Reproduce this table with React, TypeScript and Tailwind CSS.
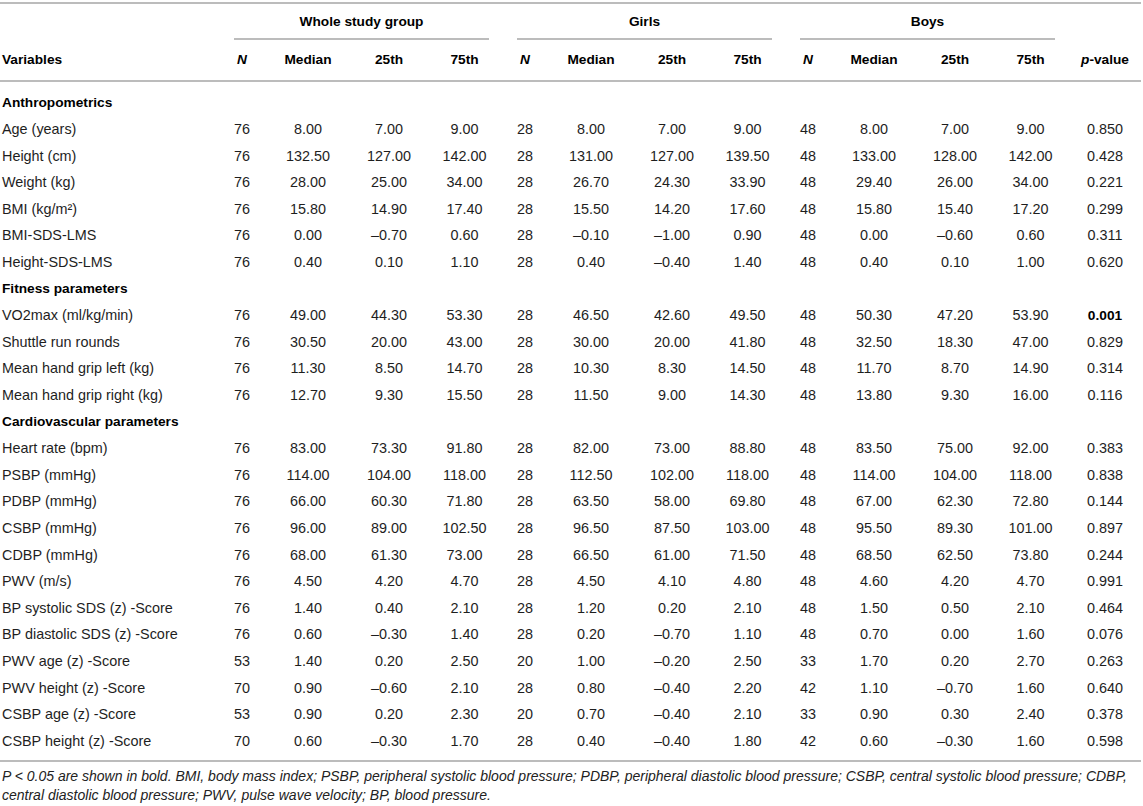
import React from "react";

type Row = { label: string; cells: string[]; p: string; bold?: boolean } | { section: string };

const rows: Row[] = [
  { section: "Anthropometrics" },
  { label: "Age (years)", cells: ["76", "8.00", "7.00", "9.00", "28", "8.00", "7.00", "9.00", "48", "8.00", "7.00", "9.00"], p: "0.850" },
  { label: "Height (cm)", cells: ["76", "132.50", "127.00", "142.00", "28", "131.00", "127.00", "139.50", "48", "133.00", "128.00", "142.00"], p: "0.428" },
  { label: "Weight (kg)", cells: ["76", "28.00", "25.00", "34.00", "28", "26.70", "24.30", "33.90", "48", "29.40", "26.00", "34.00"], p: "0.221" },
  { label: "BMI (kg/m²)", cells: ["76", "15.80", "14.90", "17.40", "28", "15.50", "14.20", "17.60", "48", "15.80", "15.40", "17.20"], p: "0.299" },
  { label: "BMI-SDS-LMS", cells: ["76", "0.00", "–0.70", "0.60", "28", "–0.10", "–1.00", "0.90", "48", "0.00", "–0.60", "0.60"], p: "0.311" },
  { label: "Height-SDS-LMS", cells: ["76", "0.40", "0.10", "1.10", "28", "0.40", "–0.40", "1.40", "48", "0.40", "0.10", "1.00"], p: "0.620" },
  { section: "Fitness parameters" },
  { label: "VO2max (ml/kg/min)", cells: ["76", "49.00", "44.30", "53.30", "28", "46.50", "42.60", "49.50", "48", "50.30", "47.20", "53.90"], p: "0.001", bold: true },
  { label: "Shuttle run rounds", cells: ["76", "30.50", "20.00", "43.00", "28", "30.00", "20.00", "41.80", "48", "32.50", "18.30", "47.00"], p: "0.829" },
  { label: "Mean hand grip left (kg)", cells: ["76", "11.30", "8.50", "14.70", "28", "10.30", "8.30", "14.50", "48", "11.70", "8.70", "14.90"], p: "0.314" },
  { label: "Mean hand grip right (kg)", cells: ["76", "12.70", "9.30", "15.50", "28", "11.50", "9.00", "14.30", "48", "13.80", "9.30", "16.00"], p: "0.116" },
  { section: "Cardiovascular parameters" },
  { label: "Heart rate (bpm)", cells: ["76", "83.00", "73.30", "91.80", "28", "82.00", "73.00", "88.80", "48", "83.50", "75.00", "92.00"], p: "0.383" },
  { label: "PSBP (mmHg)", cells: ["76", "114.00", "104.00", "118.00", "28", "112.50", "102.00", "118.00", "48", "114.00", "104.00", "118.00"], p: "0.838" },
  { label: "PDBP (mmHg)", cells: ["76", "66.00", "60.30", "71.80", "28", "63.50", "58.00", "69.80", "48", "67.00", "62.30", "72.80"], p: "0.144" },
  { label: "CSBP (mmHg)", cells: ["76", "96.00", "89.00", "102.50", "28", "96.50", "87.50", "103.00", "48", "95.50", "89.30", "101.00"], p: "0.897" },
  { label: "CDBP (mmHg)", cells: ["76", "68.00", "61.30", "73.00", "28", "66.50", "61.00", "71.50", "48", "68.50", "62.50", "73.80"], p: "0.244" },
  { label: "PWV (m/s)", cells: ["76", "4.50", "4.20", "4.70", "28", "4.50", "4.10", "4.80", "48", "4.60", "4.20", "4.70"], p: "0.991" },
  { label: "BP systolic SDS (z) -Score", cells: ["76", "1.40", "0.40", "2.10", "28", "1.20", "0.20", "2.10", "48", "1.50", "0.50", "2.10"], p: "0.464" },
  { label: "BP diastolic SDS (z) -Score", cells: ["76", "0.60", "–0.30", "1.40", "28", "0.20", "–0.70", "1.10", "48", "0.70", "0.00", "1.60"], p: "0.076" },
  { label: "PWV age (z) -Score", cells: ["53", "1.40", "0.20", "2.50", "20", "1.00", "–0.20", "2.50", "33", "1.70", "0.20", "2.70"], p: "0.263" },
  { label: "PWV height (z) -Score", cells: ["70", "0.90", "–0.60", "2.10", "28", "0.80", "–0.40", "2.20", "42", "1.10", "–0.70", "1.60"], p: "0.640" },
  { label: "CSBP age (z) -Score", cells: ["53", "0.90", "0.20", "2.30", "20", "0.70", "–0.40", "2.10", "33", "0.90", "0.30", "2.40"], p: "0.378" },
  { label: "CSBP height (z) -Score", cells: ["70", "0.60", "–0.30", "1.70", "28", "0.40", "–0.40", "1.80", "42", "0.60", "–0.30", "1.60"], p: "0.598" },
];

const cols =
  "grid grid-cols-[220px_44px_88px_74px_77px_44px_88px_74px_77px_44px_88px_74px_77px_72px]";

const groups = ["Whole study group", "Girls", "Boys"];

export default function App() {
  return (
    <div className="w-[1143px] h-[806px] bg-white text-[#1e1e1e] text-[14.4px] overflow-hidden" style={{ fontFamily: "'Liberation Sans', Arial, sans-serif" }}>
      <div className="w-[1141px]">
        {/* top rule */}
        <div className="mt-[2px] h-[2px] bg-[#bcbcbc]" />

        {/* group headers */}
        <div className="grid grid-cols-[220px_283px_283px_283px_72px]">
          <div />
          {groups.map((g) => (
            <div key={g} className="flex flex-col">
              <div className="pt-[8px] h-[34px] leading-[20px] text-center font-bold text-[13.7px] text-black">{g}</div>
              <div className="mx-[14px] h-[2px] bg-[#bcbcbc]" />
            </div>
          ))}
          <div />
        </div>

        {/* column headers */}
        <div className={`${cols} h-[40px] items-center font-bold text-[13.7px] text-black`}>
          <div className="pl-[2px]">Variables</div>
          {groups.map((g) => (
            <React.Fragment key={g}>
              <div className="text-center italic">N</div>
              <div className="text-center">Median</div>
              <div className="text-center">25th</div>
              <div className="text-center">75th</div>
            </React.Fragment>
          ))}
          <div className="text-center">
            <span className="italic">p</span>-value
          </div>
        </div>
        <div className="h-[2px] bg-[#bcbcbc]" />

        {/* body */}
        <div className="pt-[8px]">
          {rows.map((r, i) =>
            "section" in r ? (
              <div key={i} className="h-[26.6px] flex items-center pl-[2px] font-bold text-[13.7px] text-black">
                {r.section}
              </div>
            ) : (
              <div key={i} className={`${cols} h-[26.6px] items-center`}>
                <div className="pl-[2px] whitespace-nowrap">{r.label}</div>
                {r.cells.map((c, j) => (
                  <div key={j} className="text-center">{c}</div>
                ))}
                <div className={r.bold ? "text-center font-bold text-[13.7px] text-black" : "text-center"}>{r.p}</div>
              </div>
            )
          )}
        </div>

        <div className="mt-[5px] h-[2px] bg-[#bcbcbc]" />

        {/* footnote */}
        <p className="pt-[5px] pl-[2px] italic text-[14px] leading-[19px] whitespace-nowrap text-[#222]">
          P &lt; 0.05 are shown in bold. BMI, body mass index; PSBP, peripheral systolic blood pressure; PDBP, peripheral diastolic blood pressure; CSBP, central systolic blood pressure; CDBP,
          <br />
          central diastolic blood pressure; PWV, pulse wave velocity; BP, blood pressure.
        </p>
      </div>
    </div>
  );
}
